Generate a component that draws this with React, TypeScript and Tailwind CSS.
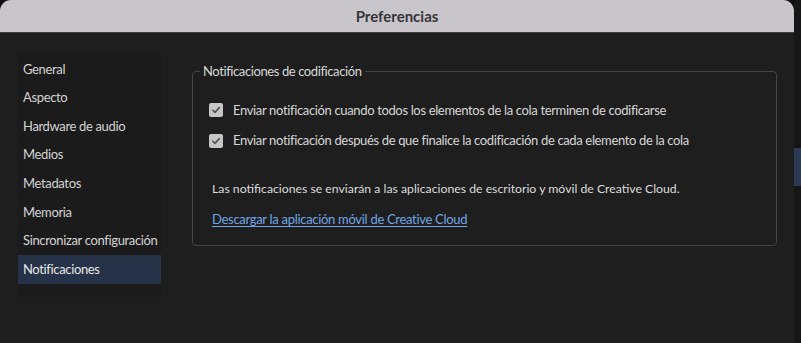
import React from 'react';

const menu = [
  'General',
  'Aspecto',
  'Hardware de audio',
  'Medios',
  'Metadatos',
  'Memoria',
  'Sincronizar configuración',
  'Notificaciones',
];

function Check() {
  return (
    <span className="flex h-[14px] w-[14px] shrink-0 items-center justify-center rounded-[2px] bg-[#c6c6c6]">
      <svg width="10" height="10" viewBox="0 0 10 10" fill="none">
        <path d="M1.8 5.2 L4 7.4 L8.3 2.6" stroke="#555555" strokeWidth="1.6" strokeLinecap="round" strokeLinejoin="round" />
      </svg>
    </span>
  );
}

export default function App() {
  const selected = 'Notificaciones';

  return (
    <div
      className="flex h-[343px] w-[801px] overflow-hidden bg-[#0e0e0e] text-[13px] text-[#d6d6d6]"
      style={{ fontFamily: 'Lato, "Noto Sans", sans-serif' }}
    >
      {/* Preferences window */}
      <div className="flex w-[794px] flex-col overflow-hidden rounded-t-[11px] bg-[#1e1e1e]">
        <div className="flex h-[33px] items-center justify-center border-b border-[#3c3c3c] bg-[#c9c6cb]">
          <span className="text-[15px] font-bold text-[#363537]">Preferencias</span>
        </div>

        <div className="flex flex-1 pl-[18px] pt-[20px]">
          {/* Sidebar */}
          <div className="flex h-[244px] w-[143px] flex-col bg-[#1b1b1b] pt-[2px]">
            {menu.map((item) => (
              <div
                key={item}
                className={`flex h-[28.6px] items-center whitespace-nowrap pl-[5px] tracking-[-0.35px] ${
                  item === selected ? 'bg-[#253247] text-[#e6e6e6]' : 'text-[#d4d4d4]'
                }`}
              >
                {item}
              </div>
            ))}
          </div>

          {/* Content */}
          <div className="ml-[31px] mt-[9px] w-[585px]">
            <fieldset className="h-[184px] rounded-[4px] border border-[#454545] px-[16px] pb-0 pt-[19px]">
              <legend className="ml-[-9px] px-[3px] tracking-[-0.4px] text-[#d8d8d8]">
                Notificaciones de codificación
              </legend>
              <div className="flex flex-col gap-[11px] tracking-[-0.35px]">
                <label className="flex items-center gap-[10px]">
                  <Check />
                  <span>Enviar notificación cuando todos los elementos de la cola terminen de codificarse</span>
                </label>
                <label className="flex items-center gap-[10px]">
                  <Check />
                  <span>Enviar notificación después de que finalice la codificación de cada elemento de la cola</span>
                </label>
              </div>
              <p className="mt-[29px] pl-[3px] text-[12.25px] text-[#dcdcdc]">
                Las notificaciones se enviarán a las aplicaciones de escritorio y móvil de Creative Cloud.
              </p>
              <a className="mt-[12px] block w-fit pl-[3px] tracking-[-0.3px] text-[#6fa6e4] underline underline-offset-2">
                Descargar la aplicación móvil de Creative Cloud
              </a>
            </fieldset>
          </div>
        </div>
      </div>

      {/* Neighbouring window edge */}
      <div className="flex w-[7px] flex-col bg-[#161616] pt-[120px]">
        <div className="h-[28px]" />
        <div className="h-[38px] bg-[#2b3a52]" />
      </div>
    </div>
  );
}
